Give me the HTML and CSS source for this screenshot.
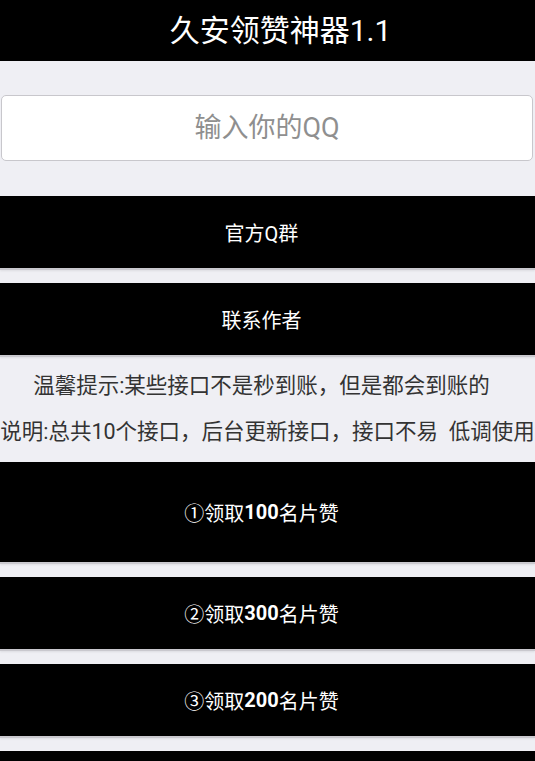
FILE: index.html
```html
<!DOCTYPE html>
<html lang="zh-CN">
<head>
<meta charset="utf-8">
<title>久安领赞神器1.1</title>
<link rel="stylesheet" href="styles.css">
</head>
<body>
<header class="bar">
  <h1 class="bar-title">久安领赞神器1.1</h1>
</header>
<main class="content">
  <div class="field">
    <input class="qq-input" type="text" placeholder="输入你的QQ">
  </div>
  <div class="btn-list">
    <button class="btn">官方Q群</button>
    <button class="btn">联系作者</button>
  </div>
  <div class="notice">
    <p class="notice-line">温馨提示:某些接口不是秒到账，但是都会到账的</p>
    <p class="notice-line notice-wide">说明:总共10个接口，后台更新接口，接口不易&nbsp;&nbsp;低调使用</p>
  </div>
  <div class="btn-list">
    <button class="btn btn-tall">①领取<b class="num">100</b>名片赞</button>
    <button class="btn">②领取<b class="num">300</b>名片赞</button>
    <button class="btn">③领取<b class="num">200</b>名片赞</button>
    <button class="btn" aria-label="更多"></button>
  </div>
</main>
</body>
</html>
```
FILE: styles.css
```css
html, body {
  margin: 0;
  padding: 0;
}
body {
  background: #efeff4;
  font-family: Roboto, "Noto Sans CJK SC", "Noto Sans", sans-serif;
  width: 535px;
  overflow: hidden;
}
.bar {
  background: #000;
  height: 61px;
  display: flex;
  align-items: center;
  justify-content: center;
  padding-left: 26px;
}
.bar-title {
  margin: 0;
  color: #fff;
  font-size: 30px;
  font-weight: 400;
  line-height: 61px;
}
.content {
  display: flex;
  flex-direction: column;
}
.field {
  padding: 34px 2px 35px 1px;
}
.qq-input {
  display: block;
  box-sizing: border-box;
  width: 100%;
  height: 66px;
  margin: 0;
  border: 1px solid #c8c7cc;
  border-radius: 5px;
  background: #fff;
  font-family: Roboto, "Noto Sans CJK SC", sans-serif;
  font-size: 27px;
  text-align: center;
  color: #333;
  outline: none;
}
.qq-input::placeholder {
  color: #8f8f8f;
}
.btn-list {
  display: flex;
  flex-direction: column;
  gap: 15px;
}
.btn {
  display: flex;
  align-items: center;
  justify-content: center;
  height: 72px;
  margin: 0;
  padding: 0 12px 0 0;
  border: 0;
  border-radius: 0;
  background: #000;
  color: #fff;
  font-family: Roboto, "Noto Sans CJK SC", sans-serif;
  font-size: 20px;
  font-weight: 400;
  box-shadow: 0 2px 0 #c9c8ce, 0 3px 2px rgba(0, 0, 0, 0.08);
}
.btn-tall {
  height: 100px;
}
.num {
  font-weight: 700;
}
.notice {
  padding: 8px 12px 7px 0;
}
.notice-line {
  margin: 0;
  font-size: 21.5px;
  line-height: 46px;
  color: #333;
  text-align: center;
  white-space: nowrap;
}
.notice-wide {
  margin-right: -12px;
}
```
